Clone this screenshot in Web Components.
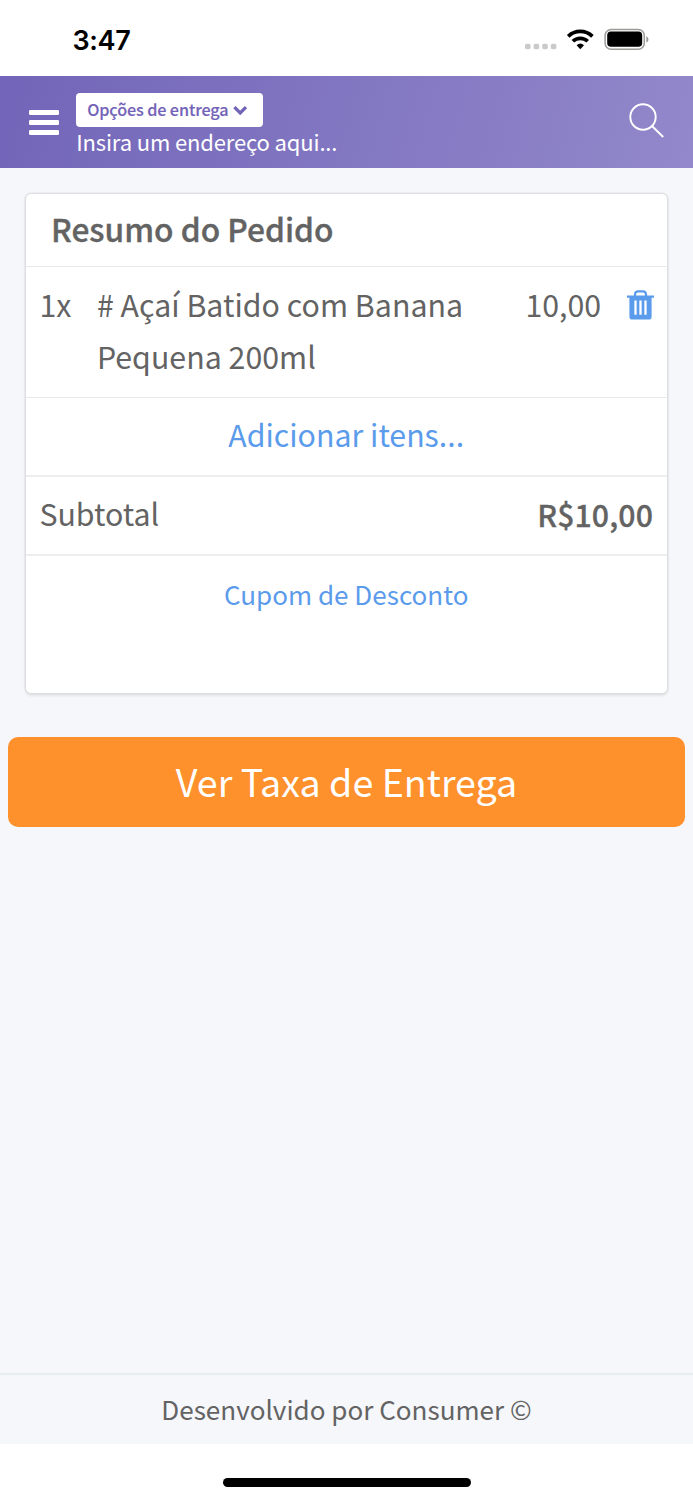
<!DOCTYPE html>
<html lang="pt-BR">
<head>
<meta charset="utf-8">
<title>Resumo do Pedido</title>
<style>
html, body { margin: 0; padding: 0; }
body { background: #fff; color: #636363; font-family: "Noto Sans CJK SC", "Open Sans", sans-serif; }
</style>
</head>
<body>
<order-screen></order-screen>
<script>
function define(name, html) {
  const template = document.createElement('template');
  template.innerHTML = html;
  customElements.define(name, class extends HTMLElement {
    constructor() {
      super();
      this.attachShadow({ mode: 'open' }).appendChild(template.content.cloneNode(true));
    }
  });
}

define('phone-status', `
<style>
:host { display: flex; box-sizing: border-box; height: 76.4px; padding: 25px 44px 0 72.6px; justify-content: space-between; align-items: flex-start; color: #000; }
time { font: 600 27px/31px Inter, sans-serif; letter-spacing: -.4px; }
svg { display: block; }
</style>
<time>3:47</time>
<svg width="126" height="28" viewBox="523 25 126 28">
  <g fill="#cacaca"><rect x="525" y="43.7" width="5.6" height="5.6" rx="1.7"/><rect x="533.6" y="43.7" width="5.6" height="5.6" rx="1.7"/><rect x="542.2" y="43.7" width="5.6" height="5.6" rx="1.7"/><rect x="550.8" y="43.7" width="5.6" height="5.6" rx="1.7"/></g>
  <g fill="none" stroke="#000" stroke-width="3.7"><path d="M568.2 36.4a17.2 17.2 0 0 1 24.2 0"/><path d="M572.9 41.3a10.6 10.6 0 0 1 14.8 0"/></g>
  <path d="M576.6 45.2a5.6 5.6 0 0 1 7.4 0L580.3 49.2z"/>
  <rect x="605.1" y="29.4" width="39.2" height="19.8" rx="6" fill="none" stroke="#9b9b98" stroke-width="1.5"/>
  <rect x="607.2" y="31.6" width="35" height="15.2" rx="3.8"/>
  <path d="M646.3 36.2c2.9 1.4 2.9 5 0 6.4z" fill="#999"/>
</svg>`);

define('delivery-select', `
<style>
:host { display: flex; box-sizing: border-box; width: 187px; height: 33.5px; padding-left: 11px; align-items: center; gap: 4.5px; border-radius: 4px; background: #fff; color: #7363b8; font-size: 16.2px; font-weight: 500; line-height: 30px; letter-spacing: -.12px; white-space: nowrap; -webkit-text-stroke: .15px #7363b8; }
span { height: 33px; }
svg { display: block; flex: none; margin-top: 1px; }
</style>
<span><slot></slot></span>
<svg width="15" height="11" viewBox="0 0 15 11"><path d="M1.4 2.2L7.2 8L13 2.2" fill="none" stroke="#7363b8" stroke-width="3.2"/></svg>`);

define('app-header', `
<style>
:host { display: flex; box-sizing: border-box; height: 92px; padding: 0 28px 0 29px; align-items: flex-start; background: linear-gradient(105deg, #7265b9 0%, #9288ca 100%); color: #fff; }
.menu { display: grid; gap: 4.8px; width: 29.6px; margin: 33.6px 17.6px 0 0; }
.menu i { height: 5.1px; border-radius: 1.2px; background: #fff; }
.where { flex: 1; padding-top: 17.1px; }
.address { font-size: 22px; line-height: 28.4px; letter-spacing: -.14px; white-space: nowrap; }
.search { display: block; margin-top: 26.3px; }
</style>
<div class="menu"><i></i><i></i><i></i></div>
<div class="where">
  <delivery-select>Opções de entrega</delivery-select>
  <div class="address">Insira um endereço aqui...</div>
</div>
<svg class="search" width="36" height="36" viewBox="0 0 36 36" fill="none" stroke="#fff" stroke-width="1.9"><circle cx="14" cy="14" r="12.7"/><path d="M23 23L34.2 34"/></svg>`);

define('trash-icon', `
<style>
:host { display: block; width: 27px; height: 31px; }
svg { display: block; }
</style>
<svg width="27" height="31" viewBox="0 0 27 31">
  <path d="M8 6V4.2Q8.3 1.4 11 1.4H16Q18.7 1.4 19 4.2V6" fill="none" stroke="#5b9bec" stroke-width="2.2"/>
  <path d="M0 5.4H27V7.8H24.6V26.4Q24.6 29.6 21.4 29.6H5.6Q2.4 29.6 2.4 26.4V7.8H0z" fill="#5b9bec"/>
  <path d="M8.5 10.6V24.8M13.5 10.6V24.8M18.5 10.6V24.8" stroke="#fff" stroke-width="2.3"/>
</svg>`);

define('order-row', `
<style>
:host { display: flex; box-sizing: border-box; border-bottom: 1px solid #e9e9e9; font-size: 30.3px; line-height: 52px; align-items: flex-start; padding: 11px 14px 0 13.4px; }
:host([kind="title"]) { height: 73px; padding: 8.5px 25px 0; font-size: 31.7px; font-weight: 500; -webkit-text-stroke: .35px #636363; }
:host([kind="item"]) { height: 131px; }
:host([kind="link"]) { height: 79px; justify-content: center; padding-top: 10px; color: #5b9bec; border-bottom: 2px solid #eee; }
:host([kind="total"]) { height: 79px; justify-content: space-between; padding-top: 10px; border-bottom: 2px solid #eee; }
:host([kind="coupon"]) { height: 137px; justify-content: center; color: #5b9bec; font-size: 26.05px; padding-top: 12px; border: 0; }
</style>
<slot></slot>`);

define('order-card', `
<style>
:host { display: block; box-sizing: border-box; height: 501px; margin: 24.6px 25px 0; border: 1px solid #dedfe0; border-radius: 6px; background: #fff; box-shadow: 0 1.5px 3px rgba(0,0,0,.08), 0 0 0 .5px rgba(0,0,0,.06); }
.qty { width: 57.5px; }
.name { width: 400px; white-space: nowrap; letter-spacing: .03px; }
.price { flex: 1; text-align: right; margin-right: 25.6px; }
trash-icon { margin: 12px -.7px 0 0; }
strong { margin-top: 1px; font-weight: 500; letter-spacing: .08px; -webkit-text-stroke: .3px #636363; }
</style>
<order-row kind="title"><span>Resumo do Pedido</span></order-row>
<order-row kind="item">
  <span class="qty">1x</span>
  <span class="name"># Açaí Batido com Banana<br>Pequena 200ml</span>
  <span class="price">10,00</span>
  <trash-icon></trash-icon>
</order-row>
<order-row kind="link"><span>Adicionar itens...</span></order-row>
<order-row kind="total"><span>Subtotal</span><strong>R$10,00</strong></order-row>
<order-row kind="coupon"><span>Cupom de Desconto</span></order-row>`);

define('primary-button', `
<style>
:host { display: flex; height: 90.4px; margin: 42.8px 8.4px 0; align-items: flex-start; justify-content: center; border-radius: 10px; background: #ff912c; color: #fff; font-size: 37.6px; line-height: 87px; }
</style>
<slot></slot>`);

define('page-footer', `
<style>
:host { display: flex; box-sizing: border-box; height: 71px; justify-content: center; border-top: 2px solid #e7ecef; font-size: 26.05px; line-height: 69px; }
</style>
<slot></slot>`);

define('home-indicator', `
<style>
:host { display: flex; height: 55.6px; justify-content: center; align-items: flex-start; background: #fff; }
i { width: 248px; height: 8.4px; margin-top: 34px; border-radius: 5px; background: #000; }
</style>
<i></i>`);

define('order-screen', `
<style>
:host { display: flex; flex-direction: column; width: 693px; height: 1500px; overflow: hidden; background: #fff; }
main { flex: 1; display: flow-root; background: #f6f7fb; }
page-footer { background: #f6f7fb; }
</style>
<phone-status></phone-status>
<app-header></app-header>
<main>
  <order-card></order-card>
  <primary-button>Ver Taxa de Entrega</primary-button>
</main>
<page-footer>Desenvolvido por Consumer ©</page-footer>
<home-indicator></home-indicator>`);
</script>
</body>
</html>
